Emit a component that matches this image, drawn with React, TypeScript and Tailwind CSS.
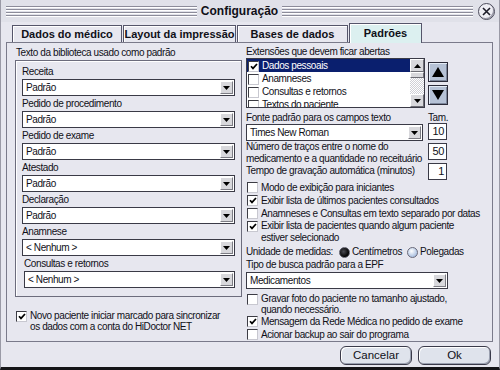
import type { ReactNode } from "react";

const font = "font-['Liberation_Sans',Arial,sans-serif]";

const Caret = () => (
  <svg width="7" height="4" viewBox="0 0 7 4" aria-hidden="true">
    <path d="M0 0h7L3.5 4z" fill="#000" />
  </svg>
);

function Combo({ value, className = "" }: { value: string; className?: string }) {
  return (
    <div
      className={`flex h-[17px] items-center border border-[#3a3a46] bg-white ${className}`}
    >
      <span className="flex-1 truncate pl-[3px] leading-[15px]">{value}</span>
      <span className="mr-[1px] flex h-[13px] w-[13px] items-center justify-center border border-t-white border-l-white border-r-[#7c7c84] border-b-[#7c7c84] bg-[#d8d8dc]">
        <Caret />
      </span>
    </div>
  );
}

function Check({ checked = false }: { checked?: boolean }) {
  return (
    <span className="mt-[1px] flex h-[11px] w-[11px] shrink-0 items-center justify-center border border-t-[#3c3c44] border-l-[#3c3c44] border-r-[#c8c8d0] border-b-[#c8c8d0] bg-white">
      {checked && (
        <svg width="8" height="7" viewBox="0 0 8 7" aria-hidden="true">
          <path d="M1 3.2l2 2.2L7 1" stroke="#000" strokeWidth="1.7" fill="none" />
        </svg>
      )}
    </span>
  );
}

function CheckRow({
  checked,
  children,
  className = "",
}: {
  checked?: boolean;
  children: ReactNode;
  className?: string;
}) {
  return (
    <div className={`flex items-start gap-[3px] ${className}`}>
      <Check checked={checked} />
      <span>{children}</span>
    </div>
  );
}

function Stripes() {
  return (
    <div className="flex flex-1 flex-col gap-[2px]">
      {[0, 1, 2, 3].map((i) => (
        <div key={i} className="h-[1px] bg-[#8c8c9a] shadow-[0_1px_0_#fff]" />
      ))}
    </div>
  );
}

function Tab({ label, width, active }: { label: string; width: string; active?: boolean }) {
  return (
    <div
      className={`flex items-center justify-center whitespace-nowrap border border-b-0 border-[#55556a] text-[11px] font-bold shadow-[inset_1px_1px_0_#fff] ${width} ${
        active ? "relative -mb-[1px] h-[20px] bg-[#dcf0f0]" : "h-[17px] bg-[#e7e7ef]"
      }`}
    >
      {label}
    </div>
  );
}

function Field({ label, indent }: { label: string; indent?: boolean }) {
  return (
    <div className={`mb-[1px] ${indent ? "pl-[2px]" : ""}`}>
      <div className="h-[14px] leading-[14px]">{label}</div>
      <Combo value={label === "Anamnese" || label === "Consultas e retornos" ? "< Nenhum >" : "Padrão"} />
    </div>
  );
}

function Arrow({ up }: { up?: boolean }) {
  return (
    <div className="flex h-[20px] w-[20px] items-center justify-center border border-[#2c2c3a] bg-[#b6c2d6] shadow-[inset_1px_1px_0_#e4ecf6,inset_-1px_-1px_0_#7c869a]">
      <svg width="12" height="10" viewBox="0 0 12 10" aria-hidden="true">
        <path d={up ? "M6 0L12 10H0z" : "M0 0h12L6 10z"} fill="#000" />
      </svg>
    </div>
  );
}

function ScrollBtn({ up }: { up?: boolean }) {
  return (
    <div className="flex h-[13px] w-[14px] items-center justify-center border border-t-white border-l-white border-r-[#6c6c74] border-b-[#6c6c74] bg-[#d8d8dc]">
      <svg width="7" height="4" viewBox="0 0 7 4" aria-hidden="true">
        <path d={up ? "M3.5 0L7 4H0z" : "M0 0h7L3.5 4z"} fill="#000" />
      </svg>
    </div>
  );
}

function NumBox({ value }: { value: string }) {
  return (
    <div className="h-[17px] w-[19px] border border-[#3a3a46] bg-white pr-[2px] text-right text-[11px] leading-[15px]">
      {value}
    </div>
  );
}

const listItems = ["Dados pessoais", "Anamneses", "Consultas e retornos", "Textos do paciente"];

export default function App() {
  return (
    <div
      className={`flex h-[370px] w-[500px] flex-col overflow-hidden border-x border-b-[3px] border-x-[#9a9aa6] border-b-[#151518] bg-[#e7e7ef] text-[10px] tracking-[-0.4px] text-[#101018] ${font}`}
    >
      <div className="flex h-[22px] shrink-0 items-center gap-[4px] bg-[#e0e1e9] pl-[5px] pr-[4px]">
        <Stripes />
        <span className="text-[12px] font-bold tracking-normal">Configuração</span>
        <Stripes />
        <span className="ml-[1px] flex h-[17px] w-[17px] items-center justify-center rounded-full border border-[#4a4a5a] bg-[#eeeef4] shadow-[inset_-1px_-1px_0_#9a9aa8]">
          <svg width="9" height="9" viewBox="0 0 9 9" aria-hidden="true">
            <path d="M1 1l7 7M8 1L1 8" stroke="#1c1c28" strokeWidth="1.6" />
          </svg>
        </span>
      </div>

      <div className="flex h-[20px] shrink-0 items-end gap-[1px] pl-[11px] tracking-normal">
        <Tab label="Dados do médico" width="w-[110px]" />
        <Tab label="Layout da impressão" width="w-[113px]" />
        <Tab label="Bases de dados" width="w-[111px]" />
        <Tab label="Padrões" width="w-[73px]" active />
      </div>

      <div className="ml-[5px] flex h-[300px] w-[487px] shrink-0 border border-[#7a7a8a]">
        <div className="w-[239px] shrink-0 pl-[8px] pt-[3px]">
          <div className="h-[13px] pl-[1px] leading-[13px]">Texto da biblioteca usado como padrão</div>
          <div className="mt-[1px] h-[237px] w-[227px] border border-[#6c6c7c] px-[6px] pt-[4px] shadow-[inset_1px_1px_0_#fff]">
            <Field label="Receita" />
            <Field label="Pedido de procedimento" />
            <Field label="Pedido de exame" />
            <Field label="Atestado" />
            <Field label="Declaração" />
            <Field label="Anamnese" />
            <Field label="Consultas e retornos" indent />
          </div>
          <CheckRow checked className="mt-[13px] pl-[1px] leading-[11px]">
            Novo paciente iniciar marcado para sincronizar
            <br />
            os dados com a conta do HiDoctor NET
          </CheckRow>
        </div>

        <div className="flex-1 pt-[3px]">
          <div className="h-[12px] leading-[12px]">Extensões que devem ficar abertas</div>
          <div className="flex">
            <div className="flex h-[50px] w-[179px] border border-[#3a3a46] bg-white">
              <div className="flex-1 overflow-hidden">
                {listItems.map((item, i) => (
                  <div
                    key={item}
                    className={`flex h-[13px] items-center gap-[3px] pl-[1px] leading-[13px] ${
                      i === 0 ? "bg-[#0a1f6e] text-white" : ""
                    }`}
                  >
                    <Check checked={i === 0} />
                    <span>{item}</span>
                  </div>
                ))}
              </div>
              <div className="flex w-[14px] flex-col bg-[repeating-conic-gradient(#ffffff_0_25%,#cfcfd6_0_50%)] bg-[length:2px_2px]">
                <ScrollBtn up />
                <div className="h-[6px] w-[14px] border border-t-white border-l-white border-r-[#6c6c74] border-b-[#6c6c74] bg-[#d8d8dc]" />
                <div className="flex-1" />
                <ScrollBtn />
              </div>
            </div>
            <div className="ml-[3px] flex flex-col gap-[3px] pt-[4px]">
              <Arrow up />
              <Arrow />
            </div>
          </div>

          <div className="mt-[4px] flex h-[11px] leading-[12px]">
            <span className="w-[182px]">Fonte padrão para os campos texto</span>
            <span>Tam.</span>
          </div>
          <div className="flex items-start">
            <Combo value="Times New Roman" className="mt-[1px] h-[16px] w-[177px]" />
            <div className="ml-[5px]">
              <NumBox value="10" />
            </div>
          </div>
          <div className="flex">
            <div className="w-[182px] leading-[12px]">
              Número de traços entre o nome do
              <br />
              medicamento e a quantidade no receituário
              <br />
              Tempo de gravação automática (minutos)
            </div>
            <div className="flex flex-col gap-[3px] pt-[2px]">
              <NumBox value="50" />
              <NumBox value="1" />
            </div>
          </div>

          <div className="mt-[1px] flex flex-col pl-[1px] leading-[13px]">
            <CheckRow>Modo de exibição para iniciantes</CheckRow>
            <CheckRow checked>Exibir lista de últimos pacientes consultados</CheckRow>
            <CheckRow>Anamneses e Consultas em texto separado por datas</CheckRow>
            <CheckRow checked className="leading-[12px]">
              Exibir lista de pacientes quando algum paciente
              <br />
              estiver selecionado
            </CheckRow>
          </div>

          <div className="mt-[1px] flex h-[14px] items-center leading-[14px]">
            <span>Unidade de medidas:</span>
            <span className="ml-[6px] h-[11px] w-[11px] rounded-full border border-[#5a5a66] bg-[radial-gradient(circle_at_40%_40%,#4a4a52,#000_70%)]" />
            <span className="ml-[2px]">Centímetros</span>
            <span className="ml-[5px] h-[11px] w-[11px] rounded-full border border-[#6a6a7a] bg-[radial-gradient(circle_at_40%_35%,#ffffff,#a9bfe0_75%)]" />
            <span className="ml-[2px]">Polegadas</span>
          </div>
          <div className="h-[12px] leading-[12px]">Tipo de busca padrão para a EPF</div>
          <Combo value="Medicamentos" className="mt-[1px] h-[15px] w-[202px]" />

          <div className="mt-[4px] flex flex-col pl-[1px]">
            <CheckRow className="leading-[11px]">
              Gravar foto do paciente no tamanho ajustado,
              <br />
              quando necessário.
            </CheckRow>
            <CheckRow checked className="leading-[13px]">
              Mensagem da Rede Médica no pedido de exame
            </CheckRow>
            <CheckRow className="leading-[13px]">Acionar backup ao sair do programa</CheckRow>
          </div>
        </div>
      </div>

      <div className="mt-[4px] flex justify-end gap-[6px] pr-[8px] text-[11.5px] tracking-normal">
        <button className="h-[19px] w-[72px] rounded-[6px] border border-[#3a3a4a] bg-[#dfe3ec] shadow-[inset_1px_1px_0_#fff,inset_-1px_-1px_0_#9aa0b0]">
          Cancelar
        </button>
        <button className="h-[19px] w-[73px] rounded-[6px] border border-[#3a3a4a] bg-[#dfe3ec] shadow-[inset_1px_1px_0_#fff,inset_-1px_-1px_0_#9aa0b0]">
          Ok
        </button>
      </div>
    </div>
  );
}
